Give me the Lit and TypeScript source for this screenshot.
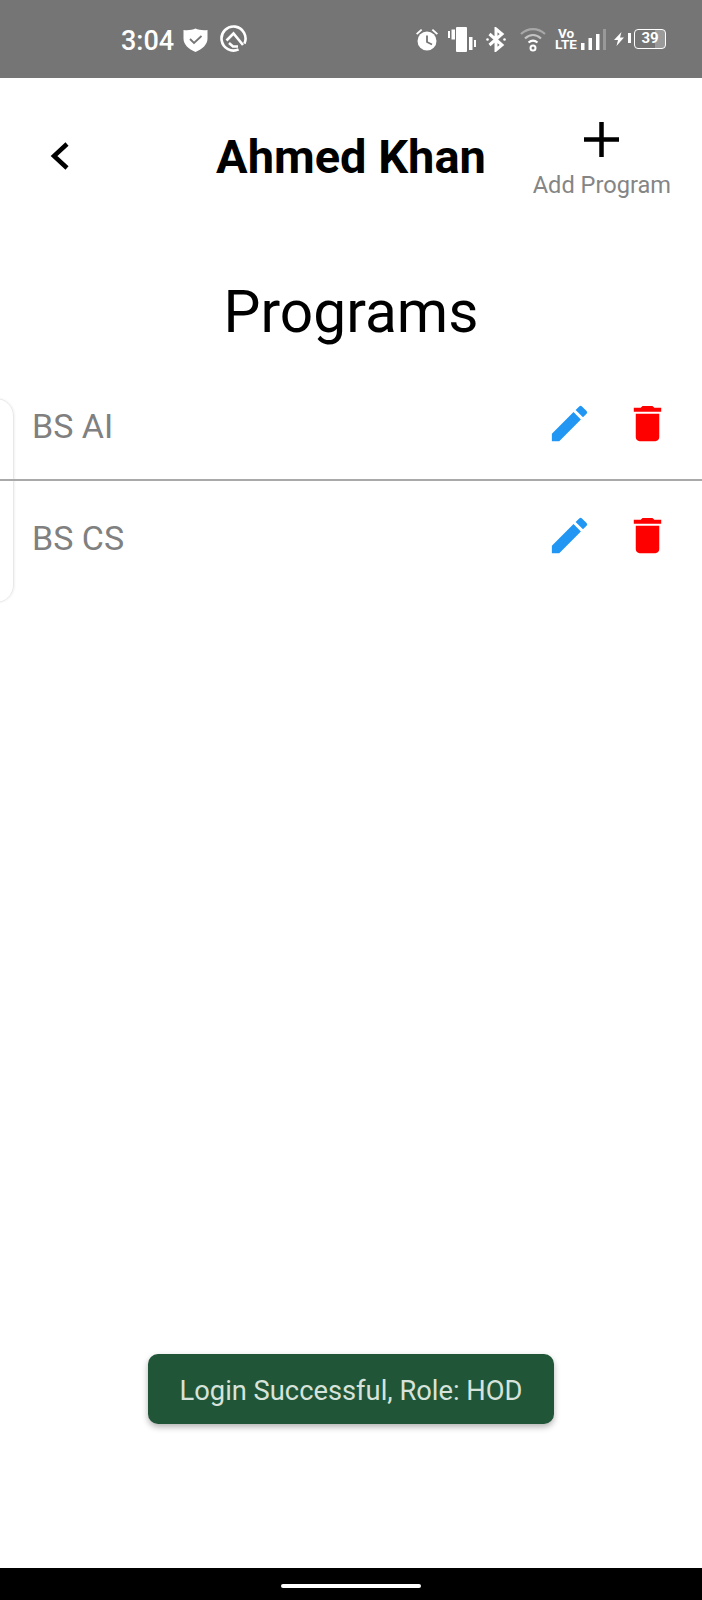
import { LitElement, html, css, svg } from 'lit';
import { customElement } from 'lit/decorators.js';

const editIcon = svg`<path d="M3 17.25V21h3.75L17.81 9.94l-3.75-3.75L3 17.25zM20.71 7.04a1 1 0 0 0 0-1.41l-2.34-2.34a1 1 0 0 0-1.41 0l-1.83 1.83 3.75 3.75 1.83-1.83z"/>`;
const trashIcon = svg`<path d="M6 19c0 1.1.9 2 2 2h8c1.1 0 2-.9 2-2V7H6v12zM19 4h-3.5l-1-1h-5l-1 1H5v2h14V4z"/>`;

const programs = ['BS AI', 'BS CS'];

@customElement('app-root')
export class AppRoot extends LitElement {
  static styles = css`
    :host {
      display: block;
      font-family: Roboto, "Liberation Sans", sans-serif;
    }
    .page {
      position: relative;
      height: 1600px;
      background: #fff;
      display: flex;
      flex-direction: column;
      overflow: hidden;
    }

    .status {
      height: 78px;
      flex: none;
      background: #757575;
      color: #fff;
      display: flex;
      align-items: center;
      justify-content: space-between;
      padding: 0 36px 0 121px;
      box-sizing: border-box;
    }
    .status-left, .status-right {
      display: flex;
      align-items: center;
    }
    .time {
      font-size: 27px;
      font-weight: 500;
      line-height: 32px;
      margin-top: 4px;
    }
    .shield { margin-left: 9px; }
    .quiet { margin-left: 12px; margin-top: -2px; }
    .vibrate { margin-left: 10px; }
    .bt { margin-left: 10px; }
    .wifi { margin-left: 14px; }
    .volte {
      margin-left: 9px;
      width: 22px;
      font-size: 13.5px;
      font-weight: 700;
      line-height: 11.5px;
      text-align: center;
    }
    .bars { margin-left: 4px; }
    .bolt { margin-left: 8px; }
    .battery {
      margin-left: 3px;
      width: 32px;
      height: 20px;
      box-sizing: border-box;
      border: 1.5px solid #fff;
      border-radius: 4px;
      font-size: 15px;
      font-weight: 700;
      line-height: 17px;
      text-align: center;
      background: linear-gradient(90deg, transparent 68%, #9a9a9a 68%);
    }

    .header {
      height: 128px;
      flex: none;
      box-sizing: border-box;
      padding-top: 28px;
      display: grid;
      grid-template-columns: 1fr auto 1fr;
      align-items: center;
    }
    .back {
      margin-left: 44px;
      display: block;
    }
    .title {
      font-size: 47px;
      font-weight: 700;
      color: #000;
      line-height: 54px;
      margin-top: 1px;
    }
    .add {
      justify-self: end;
      align-self: start;
      margin: 16px 31px 0 0;
      display: flex;
      flex-direction: column;
      align-items: center;
    }
    .add svg { display: block; }
    .add-label {
      font-size: 23.6px;
      line-height: 28px;
      color: #858585;
      margin-top: 14px;
    }

    .heading {
      margin: 73px 0 0;
      font-size: 58.6px;
      font-weight: 400;
      color: #000;
      line-height: 66px;
      text-align: center;
    }

    .list {
      position: relative;
      margin-top: 24px;
    }
    .edge {
      position: absolute;
      left: -22px;
      top: 29px;
      width: 36px;
      height: 205px;
      box-sizing: border-box;
      border: 1px solid #e8e8e8;
      border-radius: 18px;
      box-shadow: 1px 0 2px rgba(0, 0, 0, 0.05);
    }
    .row {
      position: relative;
      height: 110px;
      box-sizing: border-box;
      display: flex;
      align-items: center;
      padding: 0 31px 0 32px;
    }
    .row.lined {
      height: 112px;
      border-bottom: 2px solid #a9a9a9;
    }
    .name {
      flex: 1;
      font-size: 34px;
      line-height: 40px;
      color: #808080;
      margin-top: 3px;
    }
    .actions {
      display: flex;
      align-items: center;
      gap: 31px;
      margin-top: -2px;
    }
    .edit { fill: #2196f3; display: block; }
    .trash { fill: #ff0000; display: block; }

    .toast {
      position: absolute;
      left: 148px;
      top: 1354px;
      width: 406px;
      height: 70px;
      box-sizing: border-box;
      padding-top: 3px;
      display: flex;
      align-items: center;
      justify-content: center;
      background: #205637;
      border-radius: 10px;
      box-shadow: 0 3px 6px rgba(0, 0, 0, 0.3);
      color: #d7e3da;
      font-size: 27.3px;
    }

    .nav {
      margin-top: auto;
      height: 32px;
      flex: none;
      background: #000;
      display: flex;
      justify-content: center;
      padding-top: 16px;
      box-sizing: border-box;
    }
    .home {
      width: 140px;
      height: 4px;
      border-radius: 2px;
      background: #fff;
    }
  `;

  renderStatus() {
    return html`
      <div class="status">
        <div class="status-left">
          <span class="time">3:04</span>
          <svg class="shield" width="25" height="25" viewBox="0 0 25 25">
            <path fill="#fff" d="M12.500 1.500C15.500 3 20 3.500 24.500 3v8.500c0 6-5 10.500-12 13.500C5.500 22 .500 17.500 .500 11.500V3C5 3.500 9.500 3 12.500 1.500z"/>
            <path fill="none" stroke="#757575" stroke-width="1.800" d="M7 12l4 4 7.500-7"/>
          </svg>
          <svg class="quiet" width="27" height="27" viewBox="0 0 27 27" fill="none" stroke="#fff">
            <path stroke-width="2.600" d="M18.600 24.400A12 12 0 1 1 24.400 18.600"/>
            <path stroke-width="2.600" d="M6.500 15.500l7-7L23 20"/>
            <path stroke-width="2.600" d="M9 18l4 3.500h5"/>
          </svg>
        </div>
        <div class="status-right">
          <svg width="22" height="23" viewBox="0 0 22 23" fill="#fff">
            <circle cx="11" cy="13" r="9.500"/>
            <path d="M0 5.500L5 1l1.300 1.300L1.300 6.800zM22 5.500L17 1l-1.300 1.300 5 4.500z"/>
            <path fill="none" stroke="#757575" stroke-width="1.800" d="M11 7.500V14l5 2.500"/>
          </svg>
          <svg class="vibrate" width="28" height="25" viewBox="0 0 28 25" fill="#fff">
            <rect x="8" y="0" width="11" height="25" rx="1"/>
            <rect x="0" y="4" width="2" height="7"/>
            <rect x="3.500" y="2.500" width="3.500" height="10"/>
            <rect x="21" y="10" width="3.500" height="13"/>
            <rect x="26" y="13" width="2" height="7"/>
          </svg>
          <svg class="bt" width="20" height="25" viewBox="0 0 20 25" fill="none" stroke="#fff" stroke-width="3">
            <path d="M3.500 7l12.500 11-6 5V2l6 5L3.500 18"/>
            <circle cx="1.500" cy="12.500" r="1.300" fill="#fff" stroke="none"/>
            <circle cx="18.500" cy="12.500" r="1.300" fill="#fff" stroke="none"/>
          </svg>
          <svg class="wifi" width="26" height="25" viewBox="0 0 26 25" fill="none">
            <path stroke="#a8a8a8" stroke-width="2.200" d="M1 7C8 .500 18 .500 25 7"/>
            <path stroke="#c4c4c4" stroke-width="2.200" d="M5 11.500c5-4.500 11-4.500 16 0"/>
            <path stroke="#fff" stroke-width="2.200" d="M8.500 15.500c3-2.400 6-2.400 9 0"/>
            <circle cx="13" cy="21" r="2.500" stroke="#fff" stroke-width="2"/>
          </svg>
          <div class="volte">Vo<br />LTE</div>
          <svg class="bars" width="25" height="21" viewBox="0 0 25 21">
            <rect x="0" y="14" width="3.500" height="7" fill="#fff"/>
            <rect x="7.500" y="9" width="3.500" height="12" fill="#fff"/>
            <rect x="15" y="5" width="3.500" height="16" fill="#fff"/>
            <rect x="22" y="0" width="3" height="21" fill="#999"/>
          </svg>
          <svg class="bolt" width="17" height="14" viewBox="0 0 17 14" fill="#fff">
            <path d="M7.500 0L0 8h4l-1.500 6L10 5.500H6z"/>
            <rect x="14" y="1" width="3" height="10"/>
          </svg>
          <div class="battery">39</div>
        </div>
      </div>
    `;
  }

  render() {
    return html`
      <div class="page">
        ${this.renderStatus()}
        <div class="header">
          <svg class="back" width="30" height="36" viewBox="0 0 30 36" fill="none" stroke="#000" stroke-width="4.500">
            <path d="M23 6L10 18l13 12"/>
          </svg>
          <div class="title">Ahmed Khan</div>
          <div class="add">
            <svg width="35" height="35" viewBox="0 0 35 35" fill="#000">
              <rect x="15.250" y="0" width="4.500" height="35"/>
              <rect x="0" y="15.250" width="35" height="4.500"/>
            </svg>
            <div class="add-label">Add Program</div>
          </div>
        </div>

        <h1 class="heading">Programs</h1>

        <div class="list">
          <div class="edge"></div>
          ${programs.map((name, i) => html`
            <div class="row ${i < programs.length - 1 ? 'lined' : ''}">
              <div class="name">${name}</div>
              <div class="actions">
                <svg class="edit" width="47" height="47" viewBox="0 0 24 24">${editIcon}</svg>
                <svg class="trash" width="47" height="47" viewBox="0 0 24 24">${trashIcon}</svg>
              </div>
            </div>
          `)}
        </div>

        <div class="toast">Login Successful, Role: HOD</div>

        <div class="nav"><div class="home"></div></div>
      </div>
    `;
  }
}
